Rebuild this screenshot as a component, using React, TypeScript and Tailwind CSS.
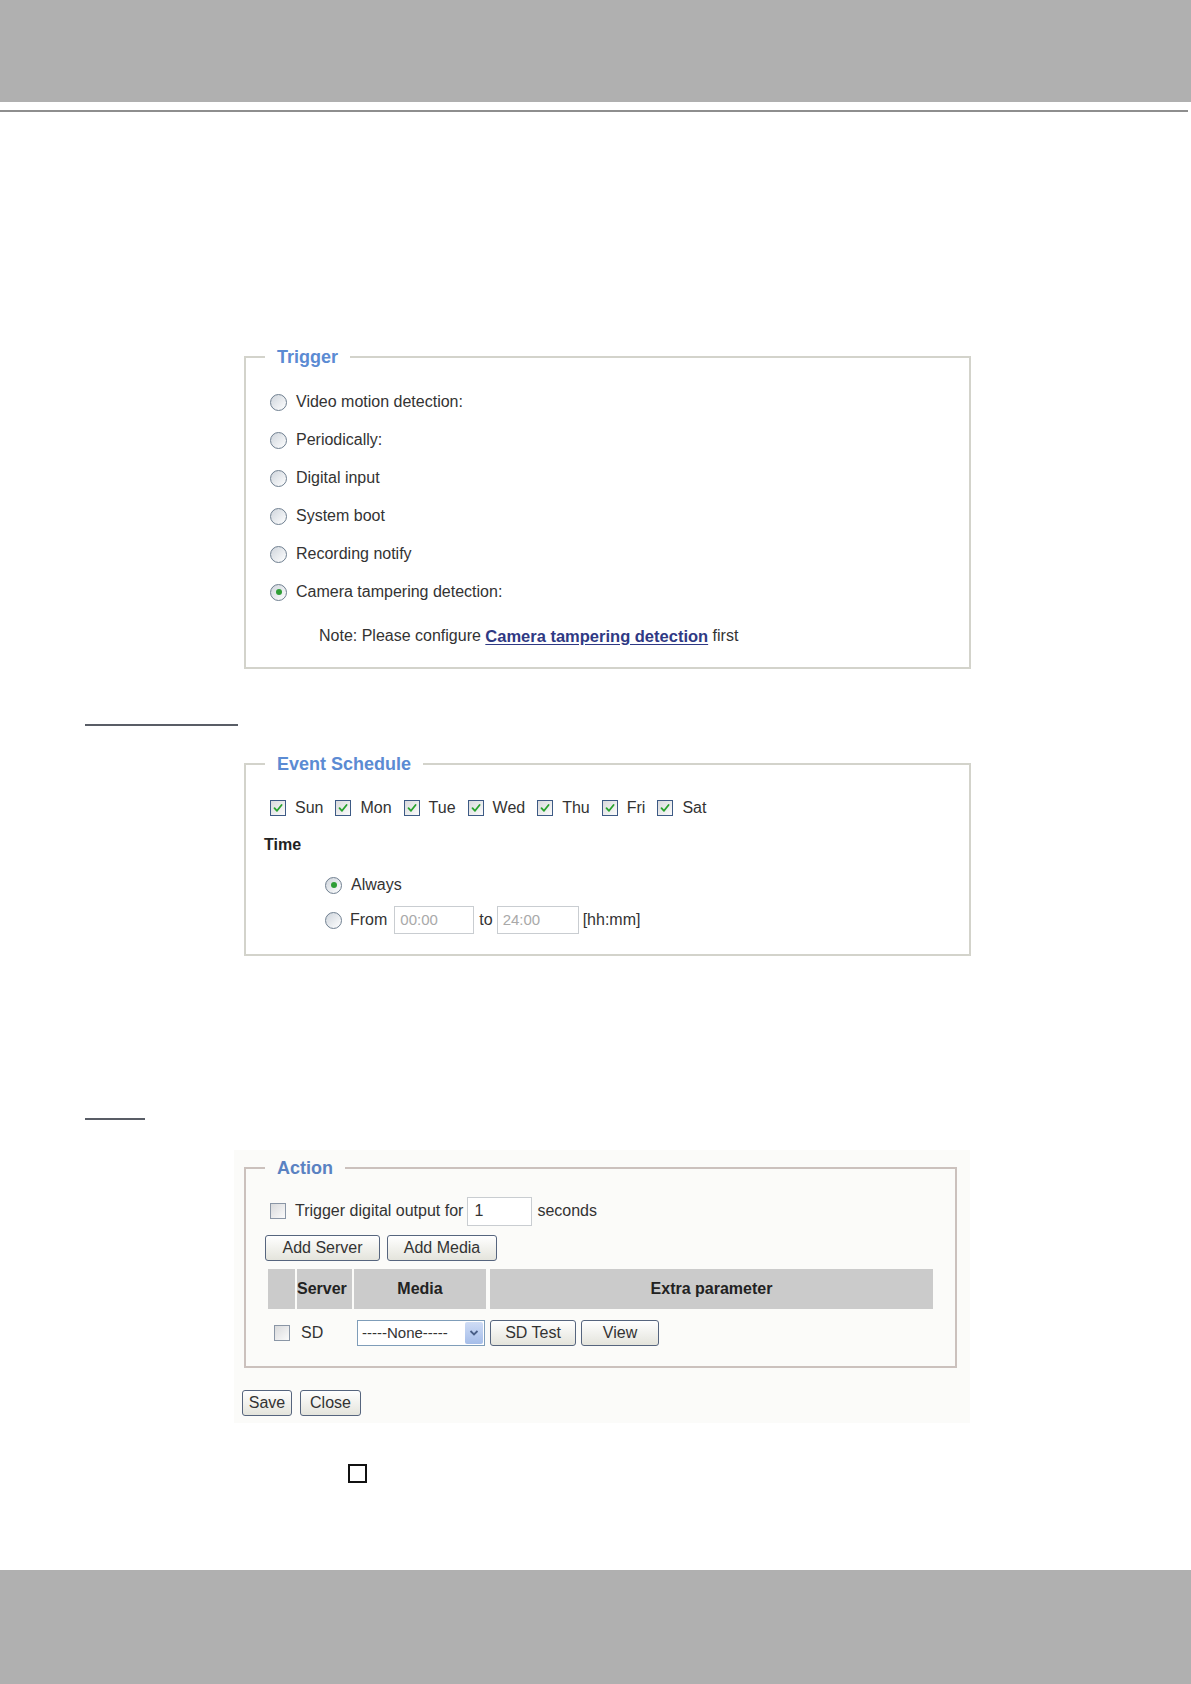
import React from 'react'

function Radio({ checked = false }: { checked?: boolean }) {
  return (
    <span className="flex w-[17px] h-[17px] shrink-0 items-center justify-center rounded-full border border-[#6f7f90] bg-linear-to-br from-[#cfd5dc] to-white">
      {checked ? <span className="w-[6px] h-[6px] rounded-full bg-[#2f9e36]" /> : null}
    </span>
  )
}

function Check({ checked = false, dark = false }: { checked?: boolean; dark?: boolean }) {
  return (
    <span
      className={
        'flex w-[16px] h-[16px] shrink-0 items-center justify-center border bg-linear-to-br from-[#d9dadc] to-[#fbfbfb] ' +
        (dark ? 'border-[#3d5a85]' : 'border-[#8a96a6]')
      }
    >
      {checked ? (
        <svg width="12" height="12" viewBox="0 0 12 12" fill="none">
          <path d="M2.5 6.2 L5 8.8 L9.6 3" stroke="#27a22d" strokeWidth="1.8" strokeLinecap="round" strokeLinejoin="round" />
        </svg>
      ) : null}
    </span>
  )
}

function Btn({ children, w }: { children: React.ReactNode; w: string }) {
  return (
    <button
      type="button"
      className={
        'h-[26px] rounded-[3px] border border-[#56657e] bg-linear-to-b from-white to-[#e4e4dc] text-[16px] leading-none text-[#333] ' +
        w
      }
    >
      {children}
    </button>
  )
}

export default function App() {
  const days = ['Sun', 'Mon', 'Tue', 'Wed', 'Thu', 'Fri', 'Sat']
  const triggers = [
    'Video motion detection:',
    'Periodically:',
    'Digital input',
    'System boot',
    'Recording notify',
    'Camera tampering detection:',
  ]

  return (
    <div className="relative flex flex-col w-[1191px] h-[1684px] bg-white font-['Liberation_Sans',Arial,sans-serif] text-[16px] text-[#333]">
      {/* header band */}
      <div className="h-[102px] bg-[#b0b0b0]" />
      <div className="mt-[8px] h-[2px] w-[1188px] bg-[#8e8e8e]" />

      {/* Trigger */}
      <fieldset className="mt-[234px] ml-[244px] w-[727px] border-2 border-[#d3d3cb] pl-[24px] pt-[15px] pb-[19px]">
        <legend className="-ml-[5px] px-[12px] text-[18px] leading-[22px] font-bold text-[#5b8bd3]">Trigger</legend>
        {triggers.map((t, i) => (
          <div key={t} className="flex h-[38px] items-center gap-[9px]">
            <Radio checked={i === 5} />
            <span>{t}</span>
          </div>
        ))}
        <div className="mt-[13px] flex h-[24px] items-center pl-[49px]">
          Note: Please configure&nbsp;
          <span className="font-bold text-[16.5px] text-[#2f3984] underline underline-offset-2">Camera tampering detection</span>
          &nbsp;first
        </div>
      </fieldset>

      <div className="mt-[55px] ml-[85px] h-[2px] w-[153px] bg-[#595d66]" />

      {/* Event Schedule */}
      <fieldset className="mt-[27px] ml-[244px] w-[727px] border-2 border-[#d3d3cb] pl-[24px] pt-[21px] pb-[19px]">
        <legend className="-ml-[5px] px-[12px] text-[18px] leading-[22px] font-bold text-[#5b8bd3]">Event Schedule</legend>
        <div className="flex h-[24px] items-center gap-[12px]">
          {days.map((d) => (
            <div key={d} className="flex items-center gap-[9px]">
              <Check checked dark />
              <span>{d}</span>
            </div>
          ))}
        </div>
        <div className="mt-[13px] flex h-[24px] items-center -ml-[6px] font-bold text-[#222]">Time</div>
        <div className="mt-[13px] flex h-[30px] items-center gap-[9px] pl-[55px]">
          <Radio checked />
          <span>Always</span>
        </div>
        <div className="mt-[5px] flex h-[30px] items-center pl-[55px]">
          <Radio />
          <span className="ml-[8px]">From</span>
          <span className="ml-[7px] flex h-[28px] w-[80px] items-center border border-[#c9cdd1] pl-[5px] text-[15px] text-[#a9a9a9]">00:00</span>
          <span className="ml-[5px]">to</span>
          <span className="ml-[4px] flex h-[28px] w-[82px] items-center border border-[#c9cdd1] pl-[5px] text-[15px] text-[#a9a9a9]">24:00</span>
          <span className="ml-[4px]">[hh:mm]</span>
        </div>
      </fieldset>

      <div className="mt-[162px] ml-[85px] h-[2px] w-[60px] bg-[#595d66]" />

      {/* Action */}
      <div className="mt-[30px] ml-[234px] w-[736px] bg-[#fbfbf9] pt-[7px] pl-[10px] pb-[7px]">
        <fieldset className="w-[713px] border-2 border-[#cbc1bd] pl-[19px] pt-[17px] pb-[19px]">
          <legend className="px-[12px] text-[18px] leading-[22px] font-bold text-[#5a82c2]">Action</legend>
          <div className="ml-[5px] flex h-[30px] items-center">
            <Check />
            <span className="ml-[9px]">Trigger digital output for</span>
            <span className="ml-[4px] flex h-[29px] w-[65px] items-center border border-[#c9cdd1] bg-white pl-[6px]">1</span>
            <span className="ml-[5px]">seconds</span>
          </div>
          <div className="mt-[9px] flex gap-[7px]">
            <Btn w="w-[115px]">Add Server</Btn>
            <Btn w="w-[110px]">Add Media</Btn>
          </div>
          <div className="mt-[8px] ml-[3px] grid w-[667px] grid-cols-[27px_55px_132px_445px] gap-x-[2px]">
            <div className="h-[40px] bg-[#cbcbcb]" />
            <div className="flex h-[40px] items-center bg-[#cbcbcb] font-bold text-[#222]">Server</div>
            <div className="flex h-[40px] items-center justify-center bg-[#cbcbcb] font-bold text-[#222]">Media</div>
            <div className="ml-[2px] flex h-[40px] items-center justify-center bg-[#cbcbcb] font-bold text-[#222]">Extra parameter</div>
            <div className="mt-[10px] flex h-[28px] items-center justify-center">
              <Check />
            </div>
            <div className="mt-[10px] flex h-[28px] items-center pl-[4px]">SD</div>
            <div className="mt-[10px] flex h-[28px] items-center pl-[3px]">
              <span className="flex h-[26px] w-[128px] items-center justify-between border border-[#7f9db9] bg-white pl-[4px] pr-[1px] text-[15px]">
                -----None-----
                <span className="flex h-[22px] w-[18px] items-center justify-center rounded-[2px] bg-linear-to-b from-[#cfdcf5] to-[#a5bde9]">
                  <svg width="10" height="8" viewBox="0 0 10 8" fill="none">
                    <path d="M1.5 2 L5 5.5 L8.5 2" stroke="#4a5f88" strokeWidth="1.8" />
                  </svg>
                </span>
              </span>
            </div>
            <div className="mt-[10px] ml-[2px] flex h-[28px] items-center gap-[5px]">
              <Btn w="w-[86px]">SD Test</Btn>
              <Btn w="w-[78px]">View</Btn>
            </div>
          </div>
        </fieldset>
        <div className="mt-[22px] -ml-[2px] flex gap-[8px]">
          <Btn w="w-[50px]">Save</Btn>
          <Btn w="w-[61px]">Close</Btn>
        </div>
      </div>

      <div className="mt-[41px] ml-[348px] h-[19px] w-[19px] border-2 border-[#111]" />

      {/* footer band */}
      <div className="mt-auto h-[114px] bg-[#b0b0b0]" />
    </div>
  )
}
